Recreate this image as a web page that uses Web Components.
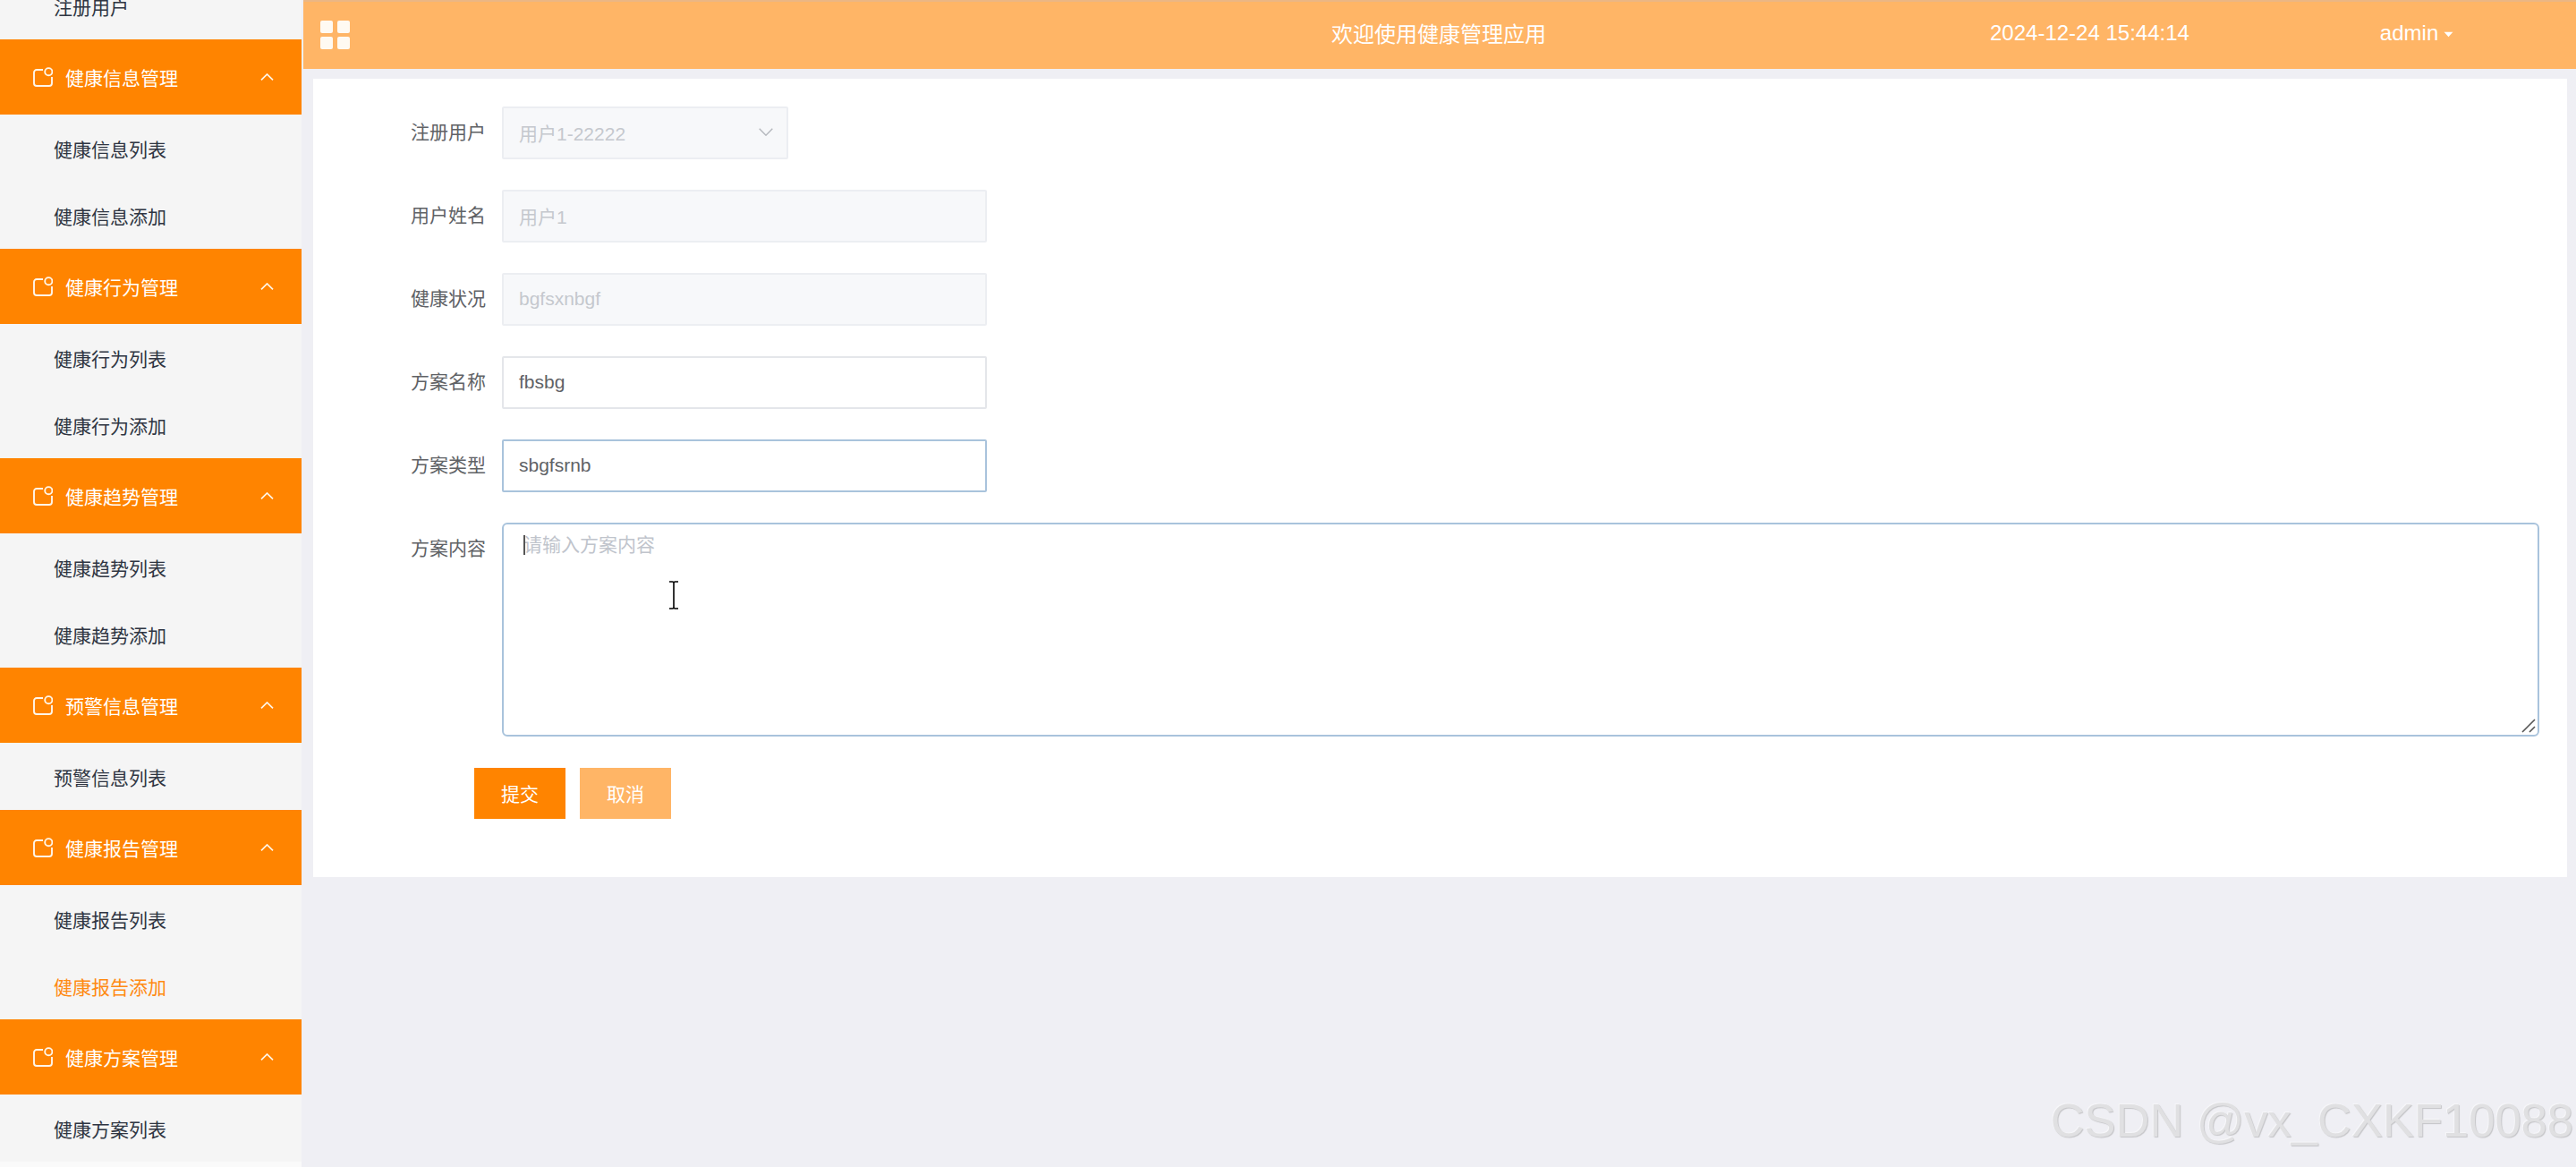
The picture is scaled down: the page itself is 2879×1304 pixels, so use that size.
<!DOCTYPE html>
<html lang="zh">
<head>
<meta charset="utf-8">
<title>健康管理应用</title>
<style>
  html, body {
    margin: 0;
    height: 100%;
    overflow: hidden;
    background: #efeff4;
    font: 21px "Liberation Sans", "Noto Sans CJK SC", sans-serif;
  }
</style>
</head>
<body>

<template id="menu-item">
  <style>
    :host {
      display: flex;
      align-items: center;
      height: 75px;
      padding: 0 0 0 60px;
      box-sizing: border-box;
      color: #2f3542;
      background: #f5f5f5;
    }
    :host([active]) { color: #ff8a12; }
  </style>
  <slot></slot>
</template>

<template id="menu-group">
  <style>
    :host { display: block; }
    .head {
      display: flex;
      align-items: center;
      height: 84px;
      padding: 0 31px 0 37px;
      box-sizing: border-box;
      color: #fff;
      background: #ff8400;
    }
    .icon { width: 22px; height: 22px; margin: 0 14px 0 0; flex: none; }
    .arrow { width: 15px; height: 8px; margin: -1px 0 0 auto; flex: none; }
  </style>
  <div class="head">
    <svg class="icon" viewBox="0 0 22 22" fill="none" stroke="#fff6e8" stroke-width="1.9">
      <path d="M11 3H4A3 3 0 0 0 1 6V18A3 3 0 0 0 4 21H18A3 3 0 0 0 21 18V11"/>
      <circle cx="17.3" cy="5.2" r="4.1"/>
    </svg>
    <span class="name"></span>
    <svg class="arrow" viewBox="0 0 15 8" fill="none" stroke="#fff6e8" stroke-width="1.7"><path d="M1 7.4L7.5 1L14 7.4"/></svg>
  </div>
  <slot></slot>
</template>

<template id="side-menu">
  <style>
    :host {
      display: block;
      flex: none;
      width: 337px;
      height: 1304px;
      overflow: hidden;
      background: #fafafa;
    }
    .list { margin-top: -31px; }
  </style>
  <div class="list"><slot></slot></div>
</template>

<template id="top-bar">
  <style>
    :host {
      display: flex;
      align-items: center;
      height: 77px;
      box-sizing: border-box;
      padding-left: 19px;
      border-top: 2px solid #ebb684;
      color: #fff;
      font-size: 24px;
      background: #ffb566;
    }
    .grid {
      display: grid;
      grid-template-columns: 14px 14px;
      grid-auto-rows: 14px;
      gap: 4px 5px;
      margin-top: -2px;
    }
    .grid i { background: #fffaf2; border-radius: 2px; }
    .title, .time, .user { margin-bottom: 6px; white-space: nowrap; }
    .title { margin-left: 1097px; width: 240px; }
    .time { margin-left: 496px; }
    .user { margin-left: 213px; display: flex; align-items: center; gap: 6px; }
    .user svg { width: 11px; height: 7px; margin-top: 3px; }
  </style>
  <div class="grid"><i></i><i></i><i></i><i></i></div>
  <span class="title"><slot name="title"></slot></span>
  <span class="time"><slot name="time"></slot></span>
  <span class="user"><slot name="user"></slot>
    <svg viewBox="0 0 10 6"><path d="M0.5 0.5H9.5L5 5.5Z" fill="#fff"/></svg>
  </span>
</template>

<template id="form-field">
  <style>
    :host {
      display: flex;
      align-items: flex-start;
      margin-bottom: 34px;
    }
    .label {
      width: 193px;
      height: 59px;
      margin-right: 18px;
      line-height: 58px;
      text-align: right;
      color: #606266;
      flex: none;
    }
  </style>
  <div class="label"></div>
  <slot></slot>
</template>

<template id="text-box">
  <style>
    :host {
      display: flex;
      align-items: center;
      width: 542px;
      height: 59px;
      box-sizing: border-box;
      padding: 0 17px 2px;
      border: 2px solid #e4e6ea;
      border-radius: 2px;
      color: #606266;
      background: #fff;
    }
    :host([disabled]) {
      color: #c5c8ce;
      background: #f7f8fa;
      border-color: #eceef2;
    }
    :host([focused]) { border-color: #a9c3dc; }
    :host([short]) { width: 320px; }
    svg { display: none; margin-left: auto; width: 16px; height: 9px; }
    :host([select]) { padding-right: 15px; }
    :host([select]) svg { display: block; }
  </style>
  <slot></slot>
  <svg viewBox="0 0 16 9" fill="none" stroke="#b4b7bd" stroke-width="1.4"><path d="M0.7 0.7L8 8.2L15.3 0.7"/></svg>
</template>

<template id="text-area">
  <style>
    :host {
      display: block;
      position: relative;
      flex: 1;
      max-width: 2277px;
      height: 239px;
      box-sizing: border-box;
      padding: 6px 22px;
      border: 2px solid #a9c3dc;
      border-radius: 6px;
      color: #c0c4cc;
      background: #fff;
    }
    .caret {
      position: absolute;
      left: 22px;
      top: 12px;
      width: 2px;
      height: 22px;
      background: #555;
    }
    .grip {
      position: absolute;
      right: 2px;
      bottom: 2px;
      width: 16px;
      height: 16px;
    }
  </style>
  <span class="caret"></span>
  <slot></slot>
  <svg class="grip" viewBox="0 0 16 16" stroke="#555" stroke-width="1.6"><path d="M15 1L1 15M15 9L9 15"/></svg>
</template>

<template id="action-button">
  <style>
    :host {
      display: flex;
      align-items: center;
      justify-content: center;
      width: 102px;
      height: 57px;
      padding-bottom: 2px;
      box-sizing: border-box;
      color: #fff;
      background: #ff8400;
    }
    :host([plain]) { background: #ffb566; }
  </style>
  <slot></slot>
</template>

<template id="form-panel">
  <style>
    :host {
      display: block;
      height: 892px;
      box-sizing: border-box;
      margin: 11px 10px 0 11px;
      padding: 31px 31px 0 0;
      background: #fff;
    }
    .actions {
      display: flex;
      gap: 16px;
      margin: 35px 0 0 180px;
    }
  </style>
  <slot></slot>
  <div class="actions"><slot name="actions"></slot></div>
</template>

<template id="health-app">
  <style>
    :host {
      display: flex;
      position: relative;
      height: 1304px;
      overflow: hidden;
    }
    main { flex: 1; margin-left: 2px; min-width: 0; }
    .watermark {
      position: absolute;
      right: 3px;
      bottom: 22px;
      font-size: 52.5px;
      line-height: 60px;
      white-space: nowrap;
      color: #e0e0e2;
      text-shadow: 1px 1px 1px #c4c4c7, -1px -1px 0 #f6f6f9;
    }
    .pointer {
      position: absolute;
      left: 747px;
      top: 649px;
      width: 12px;
      height: 32px;
    }
  </style>
  <slot name="menu"></slot>
  <main><slot></slot></main>
  <div class="watermark">CSDN @vx_CXKF10088</div>
  <svg class="pointer" viewBox="0 0 12 32" fill="none" stroke="#000" stroke-width="1.6">
    <path d="M1 1H4.5Q6 1 6 2.5V29.5Q6 31 4.5 31H1M11 1H7.5Q6 1 6 2.5M6 29.5Q6 31 7.5 31H11"/>
  </svg>
</template>

<health-app>
  <side-menu slot="menu">
    <menu-item>注册用户</menu-item>
    <menu-group name="健康信息管理">
      <menu-item>健康信息列表</menu-item>
      <menu-item>健康信息添加</menu-item>
    </menu-group>
    <menu-group name="健康行为管理">
      <menu-item>健康行为列表</menu-item>
      <menu-item>健康行为添加</menu-item>
    </menu-group>
    <menu-group name="健康趋势管理">
      <menu-item>健康趋势列表</menu-item>
      <menu-item>健康趋势添加</menu-item>
    </menu-group>
    <menu-group name="预警信息管理">
      <menu-item>预警信息列表</menu-item>
    </menu-group>
    <menu-group name="健康报告管理">
      <menu-item>健康报告列表</menu-item>
      <menu-item active>健康报告添加</menu-item>
    </menu-group>
    <menu-group name="健康方案管理">
      <menu-item>健康方案列表</menu-item>
    </menu-group>
  </side-menu>

  <top-bar>
    <span slot="title">欢迎使用健康管理应用</span>
    <span slot="time">2024-12-24 15:44:14</span>
    <span slot="user">admin</span>
  </top-bar>

  <form-panel>
    <form-field label="注册用户"><text-box disabled short select>用户1-22222</text-box></form-field>
    <form-field label="用户姓名"><text-box disabled>用户1</text-box></form-field>
    <form-field label="健康状况"><text-box disabled>bgfsxnbgf</text-box></form-field>
    <form-field label="方案名称"><text-box>fbsbg</text-box></form-field>
    <form-field label="方案类型"><text-box focused>sbgfsrnb</text-box></form-field>
    <form-field label="方案内容"><text-area>请输入方案内容</text-area></form-field>
    <action-button slot="actions">提交</action-button>
    <action-button slot="actions" plain>取消</action-button>
  </form-panel>
</health-app>

<script>

//Every element here is only a template in a shadow root, so one base class does the cloning
class TemplatedElement extends HTMLElement {
  constructor(id) {
    super();
    const template = document.querySelector('#' + id);
    this.attachShadow({mode: 'open'}).appendChild(template.content.cloneNode(true));
  }
}

class MenuItem extends TemplatedElement {
  constructor() { super('menu-item'); }
}

class MenuGroup extends TemplatedElement {
  constructor() { super('menu-group'); }
  connectedCallback() {
    this.shadowRoot.querySelector('.name').textContent = this.getAttribute('name');
  }
}

class SideMenu extends TemplatedElement {
  constructor() { super('side-menu'); }
}

class TopBar extends TemplatedElement {
  constructor() { super('top-bar'); }
}

class FormField extends TemplatedElement {
  constructor() { super('form-field'); }
  connectedCallback() {
    this.shadowRoot.querySelector('.label').textContent = this.getAttribute('label');
  }
}

class TextBox extends TemplatedElement {
  constructor() { super('text-box'); }
}

class TextArea extends TemplatedElement {
  constructor() { super('text-area'); }
}

class ActionButton extends TemplatedElement {
  constructor() { super('action-button'); }
}

class FormPanel extends TemplatedElement {
  constructor() { super('form-panel'); }
}

class HealthApp extends TemplatedElement {
  constructor() { super('health-app'); }
}

customElements.define('menu-item', MenuItem);
customElements.define('menu-group', MenuGroup);
customElements.define('side-menu', SideMenu);
customElements.define('top-bar', TopBar);
customElements.define('form-field', FormField);
customElements.define('text-box', TextBox);
customElements.define('text-area', TextArea);
customElements.define('action-button', ActionButton);
customElements.define('form-panel', FormPanel);
customElements.define('health-app', HealthApp);

</script>
</body>
</html>
